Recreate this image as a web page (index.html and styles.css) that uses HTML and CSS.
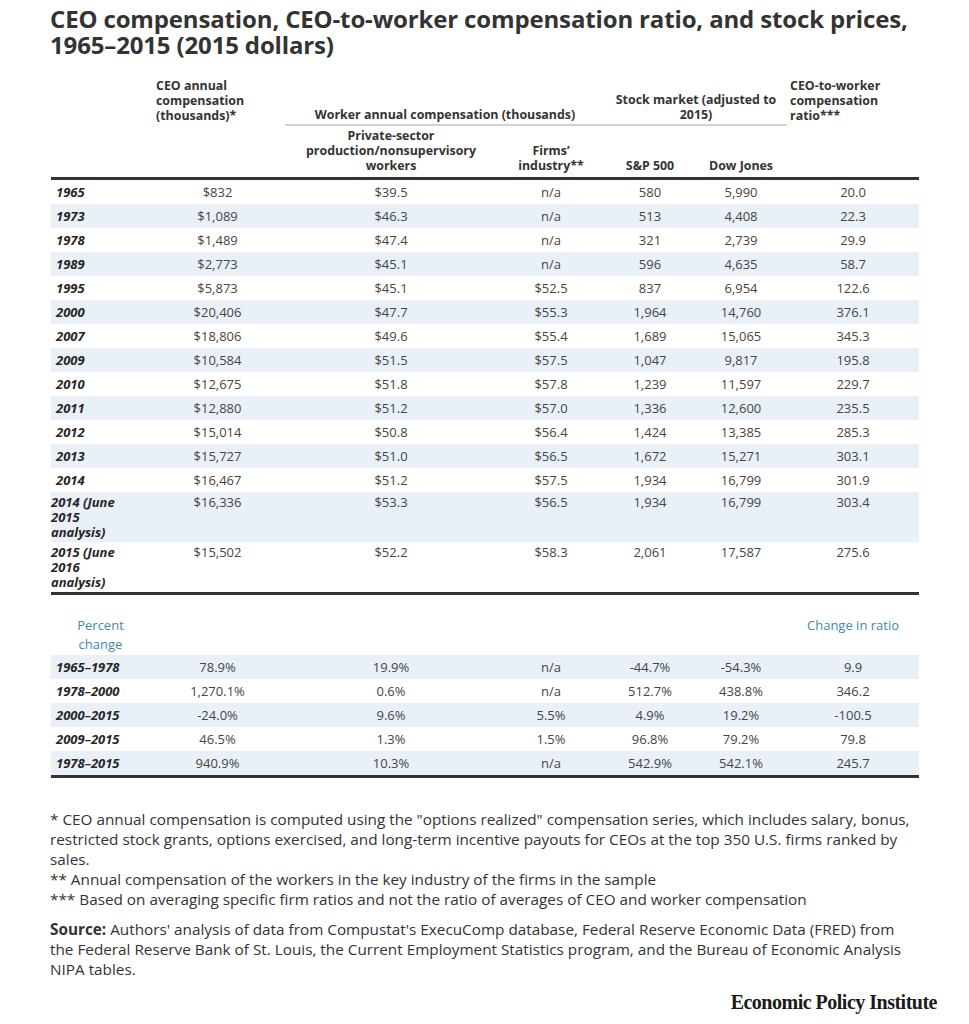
FILE: index.html
```html
<!DOCTYPE html>
<html lang="en">
<head>
<meta charset="utf-8">
<title>CEO compensation table</title>
<link rel="stylesheet" href="styles.css">
</head>
<body>
<div class="page">
  <h1 class="title">CEO compensation, CEO-to-worker compensation ratio, and stock prices, <span class="nowrap">1965–2015 (2015 dollars)</span></h1>

  <table class="data">
    <colgroup>
      <col class="c-year"><col class="c-ceo"><col class="c-priv"><col class="c-firm"><col class="c-sp"><col class="c-dow"><col class="c-ratio">
    </colgroup>
    <thead>
      <tr class="h1">
        <th></th>
        <th class="left">CEO annual<br>compensation<br>(thousands)*</th>
        <th colspan="2" class="group">Worker annual compensation (thousands)</th>
        <th colspan="2" class="group">Stock market (adjusted to<br>2015)</th>
        <th class="left ratio-h">CEO-to-worker<br>compensation<br>ratio***</th>
      </tr>
      <tr class="h2">
        <th></th>
        <th></th>
        <th>Private-sector<br>production/nonsupervisory<br>workers</th>
        <th>Firms’<br>industry**</th>
        <th>S&amp;P 500</th>
        <th>Dow Jones</th>
        <th></th>
      </tr>
    </thead>
    <tbody class="main">
      <tr><td class="yr">1965</td><td>$832</td><td>$39.5</td><td>n/a</td><td>580</td><td>5,990</td><td>20.0</td></tr>
      <tr><td class="yr">1973</td><td>$1,089</td><td>$46.3</td><td>n/a</td><td>513</td><td>4,408</td><td>22.3</td></tr>
      <tr><td class="yr">1978</td><td>$1,489</td><td>$47.4</td><td>n/a</td><td>321</td><td>2,739</td><td>29.9</td></tr>
      <tr><td class="yr">1989</td><td>$2,773</td><td>$45.1</td><td>n/a</td><td>596</td><td>4,635</td><td>58.7</td></tr>
      <tr><td class="yr">1995</td><td>$5,873</td><td>$45.1</td><td>$52.5</td><td>837</td><td>6,954</td><td>122.6</td></tr>
      <tr><td class="yr">2000</td><td>$20,406</td><td>$47.7</td><td>$55.3</td><td>1,964</td><td>14,760</td><td>376.1</td></tr>
      <tr><td class="yr">2007</td><td>$18,806</td><td>$49.6</td><td>$55.4</td><td>1,689</td><td>15,065</td><td>345.3</td></tr>
      <tr><td class="yr">2009</td><td>$10,584</td><td>$51.5</td><td>$57.5</td><td>1,047</td><td>9,817</td><td>195.8</td></tr>
      <tr><td class="yr">2010</td><td>$12,675</td><td>$51.8</td><td>$57.8</td><td>1,239</td><td>11,597</td><td>229.7</td></tr>
      <tr><td class="yr">2011</td><td>$12,880</td><td>$51.2</td><td>$57.0</td><td>1,336</td><td>12,600</td><td>235.5</td></tr>
      <tr><td class="yr">2012</td><td>$15,014</td><td>$50.8</td><td>$56.4</td><td>1,424</td><td>13,385</td><td>285.3</td></tr>
      <tr><td class="yr">2013</td><td>$15,727</td><td>$51.0</td><td>$56.5</td><td>1,672</td><td>15,271</td><td>303.1</td></tr>
      <tr><td class="yr">2014</td><td>$16,467</td><td>$51.2</td><td>$57.5</td><td>1,934</td><td>16,799</td><td>301.9</td></tr>
      <tr class="tall"><td class="yr">2014 (June<br>2015<br>analysis)</td><td>$16,336</td><td>$53.3</td><td>$56.5</td><td>1,934</td><td>16,799</td><td>303.4</td></tr>
      <tr class="tall last"><td class="yr">2015 (June<br>2016<br>analysis)</td><td>$15,502</td><td>$52.2</td><td>$58.3</td><td>2,061</td><td>17,587</td><td>275.6</td></tr>
    </tbody>
    <tbody class="pct">
      <tr class="pct-head">
        <td class="teal">Percent<br>change</td><td></td><td></td><td></td><td></td><td></td><td class="teal">Change in ratio</td>
      </tr>
      <tr><td class="yr">1965–1978</td><td>78.9%</td><td>19.9%</td><td>n/a</td><td>-44.7%</td><td>-54.3%</td><td>9.9</td></tr>
      <tr><td class="yr">1978–2000</td><td>1,270.1%</td><td>0.6%</td><td>n/a</td><td>512.7%</td><td>438.8%</td><td>346.2</td></tr>
      <tr><td class="yr">2000–2015</td><td>-24.0%</td><td>9.6%</td><td>5.5%</td><td>4.9%</td><td>19.2%</td><td>-100.5</td></tr>
      <tr><td class="yr">2009–2015</td><td>46.5%</td><td>1.3%</td><td>1.5%</td><td>96.8%</td><td>79.2%</td><td>79.8</td></tr>
      <tr class="last"><td class="yr">1978–2015</td><td>940.9%</td><td>10.3%</td><td>n/a</td><td>542.9%</td><td>542.1%</td><td>245.7</td></tr>
    </tbody>
  </table>

  <div class="notes">
    <p>* CEO annual compensation is computed using the "options realized" compensation series, which includes salary, bonus, restricted stock grants, options exercised, and long-term incentive payouts for CEOs at the top 350 U.S. firms ranked by sales.<br>** Annual compensation of the workers in the key industry of the firms in the sample<br>*** Based on averaging specific firm ratios and not the ratio of averages of CEO and worker compensation</p>
    <p class="source"><strong>Source:</strong> Authors' analysis of data from Compustat's ExecuComp database, Federal Reserve Economic Data (FRED) from the Federal Reserve Bank of St. Louis, the Current Employment Statistics program, and the Bureau of Economic Analysis NIPA tables.</p>
  </div>

  <div class="brand">Economic Policy Institute</div>
</div>
</body>
</html>
```

FILE: styles.css
```css
* { box-sizing: border-box; }

html, body {
  margin: 0;
  padding: 0;
  background: #ffffff;
}

body {
  font-family: "Open Sans", Lato, "Liberation Sans", Arial, sans-serif;
  font-variant-ligatures: none;
  color: #333333;
}

.page {
  width: 969px;
  padding: 6px 0 0 50px;
}

.title {
  margin: 0;
  width: 890px;
  font-size: 24px;
  line-height: 26px;
  font-weight: 700;
  letter-spacing: -0.15px;
  color: #333333;
}

.nowrap { white-space: nowrap; }

.data {
  margin: 20px 0 0 1px;
  width: 868px;
  border-collapse: collapse;
  table-layout: fixed;
  font-size: 13px;
}

.c-year { width: 99px; }
.c-ceo { width: 135px; }
.c-priv { width: 212px; }
.c-firm { width: 108px; }
.c-sp { width: 90px; }
.c-dow { width: 92px; }
.c-ratio { width: 132px; }

.data th {
  font-size: 12.4px;
  font-weight: 700;
  line-height: 15px;
  color: #333333;
  text-align: center;
  vertical-align: bottom;
  padding: 0;
  white-space: nowrap;
}

.data th.left { text-align: left; padding-left: 6px; }
.data th.ratio-h { padding-left: 3px; }

.h1 th { padding-bottom: 2px; }
.h1 th.group { border-bottom: 2px solid #d2d2d2; }

.h2 th {
  padding-top: 2px;
  padding-bottom: 4px;
  border-bottom: 3px solid #333333;
}

.data td {
  text-align: center;
  vertical-align: top;
  line-height: 15px;
  padding: 5px 0 4px;
  color: #454545;
  white-space: nowrap;
}

.data td.yr {
  text-align: left;
  padding-left: 5px;
  font-size: 13px;
  font-weight: 700;
  font-style: italic;
  color: #262626;
}

.main tr:nth-child(even) td { background: #eaf0f8; }
.pct tr:nth-child(even) td { background: #eaf0f8; }

.data tr.tall td { padding: 3px 0 2px; }

.data tr.last td { border-bottom: 3px solid #333333; }

.pct-head td {
  padding: 21px 0 1px;
  line-height: 19px;
}

.data td.teal {
  color: #3f8bab;
  font-size: 13px;
  font-weight: 400;
}

.notes {
  width: 866px;
  margin-top: 31px;
  font-size: 15.3px;
  line-height: 20px;
  color: #333333;
}

.notes p { margin: 0; }
.notes .source { margin-top: 10px; }
.notes strong { font-weight: 700; }

.brand {
  width: 887px;
  margin-top: 12px;
  text-align: right;
  font-family: "Liberation Serif", "Times New Roman", serif;
  font-weight: 700;
  font-size: 20px;
  letter-spacing: -0.5px;
  color: #1a1a1a;
}
```
